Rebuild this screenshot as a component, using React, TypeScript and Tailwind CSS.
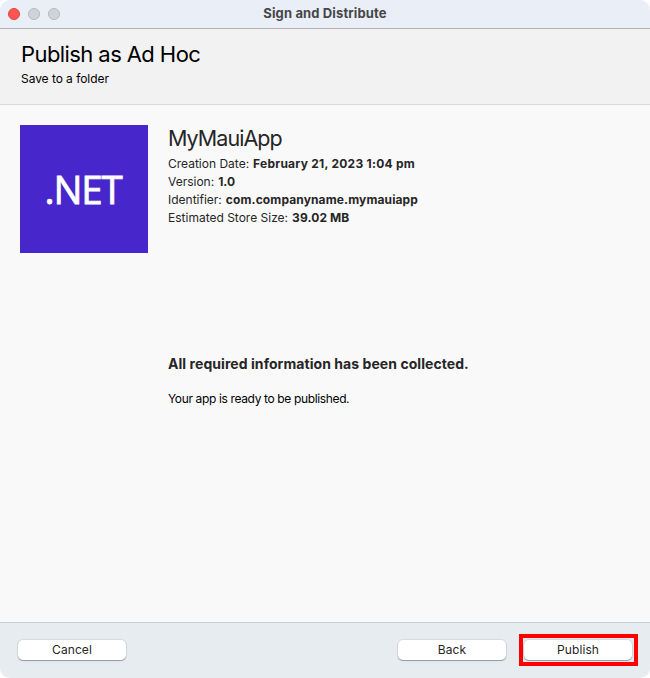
import type { ReactNode } from "react";

function TrafficLight({ className }: { className: string }) {
  return <span className={`block size-3 rounded-full border ${className}`} />;
}

function MacButton({ children }: { children: ReactNode }) {
  return (
    <button className="block h-[20px] w-[108px] rounded-[5px] bg-white text-[12px] leading-[20px] tracking-[0.1px] text-[#262626] shadow-[0_0_0_1px_rgba(0,0,0,0.07),0_1px_1px_rgba(0,0,0,0.3)]">
      {children}
    </button>
  );
}

function Detail({ label, value, tracking }: { label: string; value: string; tracking: string }) {
  return (
    <div className="flex gap-1">
      <dt>{label}</dt>
      <dd className={`font-bold ${tracking}`}>{value}</dd>
    </div>
  );
}

export default function App() {
  return (
    <div className="h-[678px] w-[650px] bg-white">
      <div className="flex h-full flex-col overflow-hidden rounded-[10px] bg-[#f9f9f9] font-['Inter',sans-serif] text-[#262626]">
        <div className="grid h-[29px] shrink-0 grid-cols-[1fr_auto_1fr] items-center border-b border-[#b1b2b4] bg-[#eaeff7] px-2">
          <div className="flex gap-2">
            <TrafficLight className="border-[#e2433f] bg-[#fe5650]" />
            <TrafficLight className="border-[#b4b8be] bg-[#cfd3da]" />
            <TrafficLight className="border-[#b4b8be] bg-[#cfd3da]" />
          </div>
          <h1 className="-mt-px text-[13px] leading-[27px] font-bold tracking-[0.13px] text-[#454749]">Sign and Distribute</h1>
        </div>

        <header className="h-[76px] shrink-0 border-b border-[#dadada] bg-[#f2f2f2] px-[21px] pt-[11px] text-black">
          <h2 className="text-[22px] leading-[28px] tracking-[-0.58px] whitespace-nowrap">Publish as Ad Hoc</h2>
          <p className="pt-[2px] text-[12px] leading-[18px] tracking-[-0.05px]">Save to a folder</p>
        </header>

        <main className="flex flex-1 gap-5 px-5 pt-5">
          <div className="flex size-32 shrink-0 items-center justify-center bg-[#4726cc] pr-[2px] font-['Open_Sans',sans-serif] text-[38.5px] leading-none font-normal text-white [-webkit-text-stroke:0.8px_white]">
            <span className="tracking-[-1.2px]">.NET</span>
          </div>
          <div>
            <h3 className="text-[21.5px] leading-[26px] tracking-[-0.95px]">MyMauiApp</h3>
            <dl className="pt-[4px] text-[12px] leading-[18px]">
              <Detail label="Creation Date:" value="February 21, 2023 1:04 pm" tracking="tracking-[0.25px]" />
              <Detail label="Version:" value="1.0" tracking="tracking-normal" />
              <Detail label="Identifier:" value="com.companyname.mymauiapp" tracking="tracking-[0.12px]" />
              <Detail label="Estimated Store Size:" value="39.02 MB" tracking="tracking-[0.1px]" />
            </dl>
            <h4 className="mt-[127px] text-[14px] leading-[20px] font-bold tracking-[0.06px]">All required information has been collected.</h4>
            <p className="mt-[16px] text-[12px] leading-[18px] tracking-[-0.36px] text-black">Your app is ready to be published.</p>
          </div>
        </main>

        <footer className="flex h-[56px] shrink-0 items-start border-t border-[#c9ccd0] bg-[#e7ecf0] pr-3 pl-[18px]">
          <div className="flex-1 pt-[17px]">
            <MacButton>Cancel</MacButton>
          </div>
          <div className="mr-[13px] pt-[17px]">
            <MacButton>Back</MacButton>
          </div>
          <div className="mt-[11px] flex h-[32px] w-[119px] items-start border-4 border-[#fe0000] pt-[2px] pl-px">
            <MacButton>Publish</MacButton>
          </div>
        </footer>
      </div>
    </div>
  );
}
